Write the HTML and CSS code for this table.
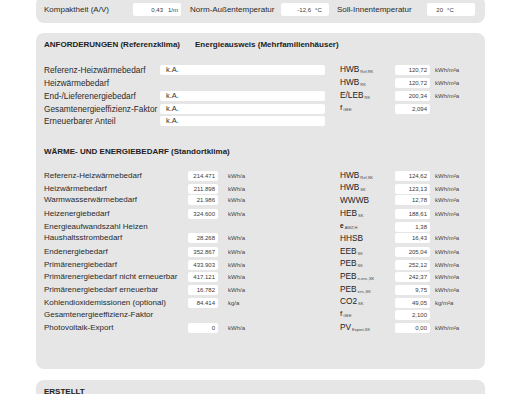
FILE: index.html
```html
<!DOCTYPE html>
<html lang="de">
<head>
<meta charset="utf-8">
<link rel="stylesheet" href="styles.css">
</head>
<body>
<div class="page">
  <section class="panel panel-top">
    <div class="climate-row">
      <span class="clabel clabel-1">Kompaktheit (A/V)</span>
      <span class="cfield"><span class="cv cv-wide">0,43</span><span class="cu cu-a">1/m</span></span>
      <span class="clabel clabel-2">Norm-Außentemperatur</span>
      <span class="cfield"><span class="cv cv-wide">-12,6</span><span class="cu">°C</span></span>
      <span class="clabel clabel-3">Soll-Innentemperatur</span>
      <span class="cfield"><span class="cv cv-narrow">20</span><span class="cu">°C</span></span>
    </div>
  </section>

  <section class="panel panel-main">
    <h2 class="head head-split"><span>ANFORDERUNGEN (Referenzklima)</span><span>Energieausweis (Mehrfamilienhäuser)</span></h2>
    <div class="req">
      <div class="req-row">
        <span class="lbl lbl-req">Referenz-Heizwärmebedarf</span><span class="wide-box">k.A.</span><span></span>
        <span class="sym">HWB<sub>Ref,RK</sub></span><span class="box">120,72</span><span class="unit">kWh/m²a</span>
      </div>
      <div class="req-row">
        <span class="lbl lbl-req">Heizwärmebedarf</span><span></span><span></span>
        <span class="sym">HWB<sub>RK</sub></span><span class="box">120,72</span><span class="unit">kWh/m²a</span>
      </div>
      <div class="req-row">
        <span class="lbl lbl-req">End-/Lieferenergiebedarf</span><span class="wide-box">k.A.</span><span></span>
        <span class="sym">E/LEB<sub>RK</sub></span><span class="box">200,34</span><span class="unit">kWh/m²a</span>
      </div>
      <div class="req-row">
        <span class="lbl lbl-req">Gesamtenergieeffizienz-Faktor</span><span class="wide-box">k.A.</span><span></span>
        <span class="sym sym-f">f<sub>GEE</sub></span><span class="box">2,094</span><span class="unit"></span>
      </div>
      <div class="req-row">
        <span class="lbl lbl-req">Erneuerbarer Anteil</span><span class="wide-box">k.A.</span><span></span>
        <span></span><span></span><span></span>
      </div>
    </div>

    <h2 class="head head-second">WÄRME- UND ENERGIEBEDARF (Standortklima)</h2>
    <div class="need">
      <div class="need-row">
        <span class="lbl">Referenz-Heizwärmebedarf</span><span class="box">214.471</span><span class="lunit">kWh/a</span>
        <span class="sym">HWB<sub>Ref,SK</sub></span><span class="box">124,62</span><span class="unit">kWh/m²a</span>
      </div>
      <div class="need-row">
        <span class="lbl">Heizwärmebedarf</span><span class="box">211.898</span><span class="lunit">kWh/a</span>
        <span class="sym">HWB<sub>SK</sub></span><span class="box">123,13</span><span class="unit">kWh/m²a</span>
      </div>
      <div class="need-row">
        <span class="lbl">Warmwasserwärmebedarf</span><span class="box">21.986</span><span class="lunit">kWh/a</span>
        <span class="sym">WWWB</span><span class="box">12,78</span><span class="unit">kWh/m²a</span>
      </div>
      <div class="need-row">
        <span class="lbl">Heizenergiebedarf</span><span class="box">324.600</span><span class="lunit">kWh/a</span>
        <span class="sym">HEB<sub>SK</sub></span><span class="box">188,61</span><span class="unit">kWh/m²a</span>
      </div>
      <div class="need-row">
        <span class="lbl">Energieaufwandszahl Heizen</span><span></span><span></span>
        <span class="sym"><span class="sym-e">e</span><sub>AWZ,H</sub></span><span class="box">1,38</span><span class="unit"></span>
      </div>
      <div class="need-row">
        <span class="lbl">Haushaltsstrombedarf</span><span class="box">28.268</span><span class="lunit">kWh/a</span>
        <span class="sym">HHSB</span><span class="box">16,43</span><span class="unit">kWh/m²a</span>
      </div>
      <div class="need-row">
        <span class="lbl">Endenergiebedarf</span><span class="box">352.867</span><span class="lunit">kWh/a</span>
        <span class="sym">EEB<sub>SK</sub></span><span class="box">205,04</span><span class="unit">kWh/m²a</span>
      </div>
      <div class="need-row">
        <span class="lbl">Primärenergiebedarf</span><span class="box">433.903</span><span class="lunit">kWh/a</span>
        <span class="sym">PEB<sub>SK</sub></span><span class="box">252,12</span><span class="unit">kWh/m²a</span>
      </div>
      <div class="need-row">
        <span class="lbl">Primärenergiebedarf nicht erneuerbar</span><span class="box">417.121</span><span class="lunit">kWh/a</span>
        <span class="sym">PEB<sub>n.ern.,SK</sub></span><span class="box">242,37</span><span class="unit">kWh/m²a</span>
      </div>
      <div class="need-row">
        <span class="lbl">Primärenergiebedarf erneuerbar</span><span class="box">16.782</span><span class="lunit">kWh/a</span>
        <span class="sym">PEB<sub>ern.,SK</sub></span><span class="box">9,75</span><span class="unit">kWh/m²a</span>
      </div>
      <div class="need-row">
        <span class="lbl">Kohlendioxidemissionen (optional)</span><span class="box">84.414</span><span class="lunit">kg/a</span>
        <span class="sym">CO2<sub>SK</sub></span><span class="box">49,05</span><span class="unit">kg/m²a</span>
      </div>
      <div class="need-row">
        <span class="lbl">Gesamtenergieeffizienz-Faktor</span><span></span><span></span>
        <span class="sym sym-f">f<sub>GEE</sub></span><span class="box">2,100</span><span class="unit"></span>
      </div>
      <div class="need-row">
        <span class="lbl">Photovoltaik-Export</span><span class="box">0</span><span class="lunit">kWh/a</span>
        <span class="sym">PV<sub>Export,SK</sub></span><span class="box">0,00</span><span class="unit">kWh/m²a</span>
      </div>
    </div>
  </section>

  <section class="panel panel-bottom">
    <h2 class="head">ERSTELLT</h2>
  </section>
</div>
</body>
</html>
```

FILE: styles.css
```css
html, body {
  margin: 0;
  padding: 0;
  background: #ffffff;
}

body {
  font-family: "Liberation Sans", Arial, sans-serif;
  color: #2a2a2a;
  overflow: hidden;
}

.page {
  padding: 0 40px 0 36px;
}

.panel {
  background: #e6e6e6;
  border-radius: 8px;
  padding: 7px 8px;
}

.panel-top {
  margin-top: -4px;
}

.panel-main {
  margin-top: 10px;
  padding-bottom: 36px;
}

.panel-bottom {
  margin-top: 11px;
  height: 40px;
}

/* top climate row */
.climate-row {
  display: flex;
  align-items: center;
  height: 13px;
}

.clabel {
  font-size: 8px;
  line-height: 13px;
  white-space: nowrap;
}

.clabel-1 { width: 89px; }
.clabel-2 { width: 91px; margin-left: 9px; }
.clabel-3 { width: 90px; margin-left: 8px; }

.cfield {
  display: flex;
  align-items: center;
  width: 48px;
  height: 13px;
  background: #ffffff;
  border-radius: 2px;
  font-size: 6px;
  color: #3a3a3a;
}

.cv {
  text-align: right;
}

.cv-wide { width: 30px; }
.cv-narrow { width: 16px; }

.cu {
  margin-left: 4px;
}

.cu-a {
  margin-left: 5px;
}

/* headings */
.head {
  margin: 0;
  font-size: 8px;
  line-height: 10px;
  font-weight: bold;
  color: #222;
  white-space: nowrap;
}

.head-split {
  display: flex;
  gap: 15px;
}

.head-second {
  margin-top: 19.5px;
}

/* requirement rows */
.req {
  margin-top: 12.5px;
}

.req-row {
  display: grid;
  grid-template-columns: 116px 165px 15px 55px 35px auto;
  align-items: center;
  height: 13px;
}

.need {
  margin-top: 11.7px;
}

.need-row {
  display: grid;
  grid-template-columns: 144px 30px 122px 55px 35px auto;
  align-items: center;
  height: 12.67px;
}

.lbl {
  font-size: 8px;
  line-height: 12px;
  white-space: nowrap;
}

.lbl-req {
  font-size: 8.3px;
}

.wide-box {
  height: 10px;
  background: #ffffff;
  border-radius: 2px;
  font-size: 7.5px;
  line-height: 10px;
  padding-left: 6px;
  color: #333;
}

.box {
  height: 10px;
  background: #ffffff;
  border-radius: 2px;
  font-size: 6px;
  line-height: 10px;
  text-align: right;
  padding-right: 3px;
  color: #3a3a3a;
}

.lunit {
  font-size: 6px;
  line-height: 10px;
  padding-left: 10px;
  color: #444;
}

.unit {
  font-size: 6px;
  line-height: 10px;
  padding-left: 5px;
  color: #444;
  white-space: nowrap;
}

.sym {
  font-size: 8.3px;
  line-height: 12px;
  white-space: nowrap;
  color: #222;
}

.sym sub {
  font-size: 4px;
  vertical-align: -1px;
  margin-left: 1px;
  color: #444;
}

.sym-f {
  font-size: 8px;
}

.sym-e {
  font-size: 6.5px;
  font-weight: bold;
}
```
